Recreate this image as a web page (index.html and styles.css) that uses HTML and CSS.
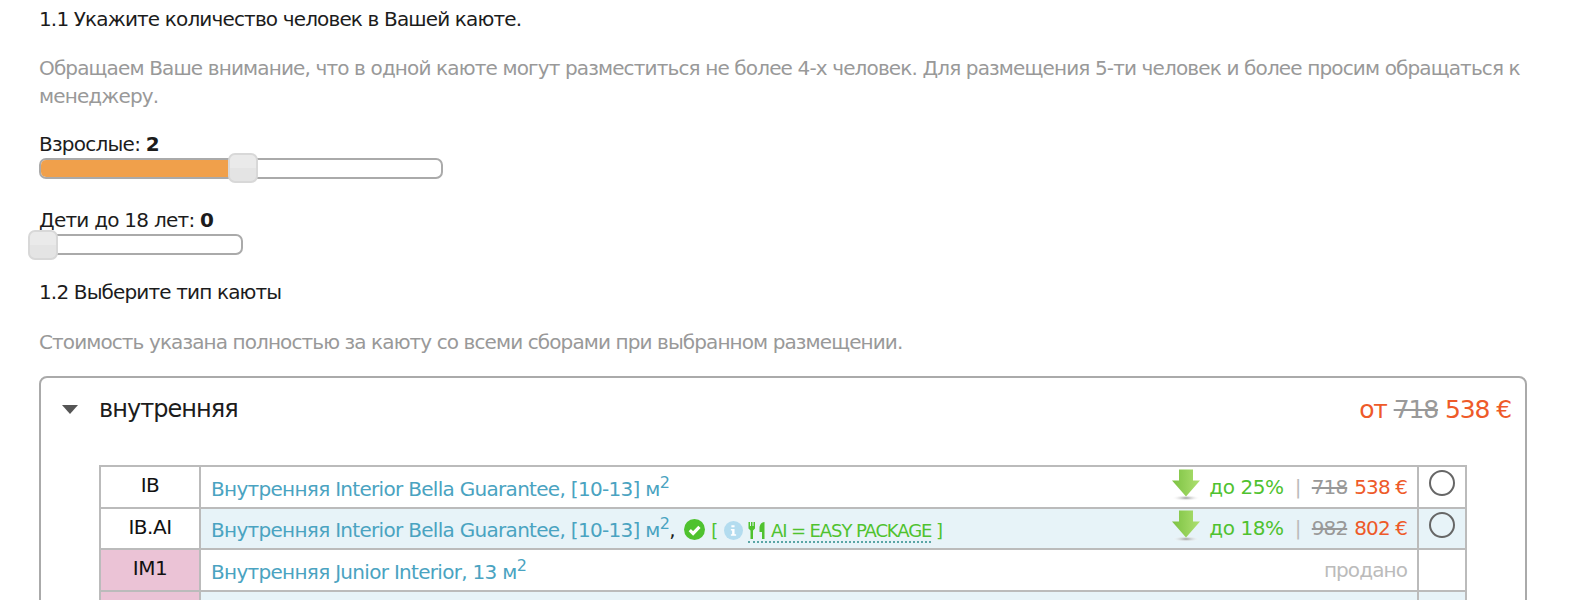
FILE: index.html
```html
<!DOCTYPE html>
<html lang="ru">
<head>
<meta charset="utf-8">
<title>Выбор каюты</title>
<link rel="stylesheet" href="styles.css">
</head>
<body>
<main class="page">
  <h2 class="step">1.1 Укажите количество человек в Вашей каюте.</h2>
  <p class="note">Обращаем Ваше внимание, что в одной каюте могут разместиться не более 4-х человек. Для размещения 5-ти человек и более просим обращаться к менеджеру.</p>
  <div class="field">
    <div class="field-label">Взрослые: <b>2</b></div>
    <div class="slider slider-wide"><div class="fill"></div><div class="handle handle-adults"></div></div>
  </div>
  <div class="field field-kids">
    <div class="field-label">Дети до 18 лет: <b>0</b></div>
    <div class="slider slider-narrow"><div class="handle handle-kids"></div></div>
  </div>
  <h2 class="step step-two">1.2 Выберите тип каюты</h2>
  <p class="note note-two">Стоимость указана полностью за каюту со всеми сборами при выбранном размещении.</p>
  <section class="panel">
    <header class="panel-head">
      <span class="caret"></span>
      <span class="panel-title">внутренняя</span>
      <span class="panel-price">от <s>718</s> 538 €</span>
    </header>
    <table class="cabins">
      <tr>
        <td class="code">IB</td>
        <td class="name">
          <div class="name-row">
            <a class="link">Внутренняя Interior Bella Guarantee, [10-13] м<sup>2</sup></a>
            <span class="offer">
              <svg class="arrow" viewBox="0 0 28 32"><defs><linearGradient id="g1" x1="0" x2="1" y1="0" y2="0"><stop offset="0" stop-color="#7cc242"/><stop offset="1" stop-color="#aee070"/></linearGradient><radialGradient id="s1"><stop offset="0" stop-color="#999"/><stop offset="1" stop-color="#fff" stop-opacity="0"/></radialGradient></defs><ellipse cx="14" cy="28.5" rx="14" ry="3" fill="url(#s1)"/><path d="M7 0H21V11H28L14 27L0 11H7Z" fill="url(#g1)"/></svg>
              <span class="save">до 25%</span><span class="bar">|</span><s class="old">718</s><span class="now">538 €</span>
            </span>
          </div>
        </td>
        <td class="pick"><span class="radio"></span></td>
      </tr>
      <tr>
        <td class="code">IB.AI</td>
        <td class="name alt">
          <div class="name-row">
            <span class="name-main"><a class="link">Внутренняя Interior Bella Guarantee, [10-13] м<sup>2</sup></a>,
            <svg class="check" viewBox="0 0 20 20"><circle cx="10" cy="10" r="10" fill="#4fc22f"/><path d="M5.5 10.5L8.7 13.7L14.7 7.5" fill="none" stroke="#fff" stroke-width="3"/></svg>
            <span class="pack">[ <svg class="info" viewBox="0 0 18 18"><circle cx="9" cy="9" r="9" fill="#b3dcef"/><path d="M7 4h3v2H7zM6.500 7.500h3.500v5h1.500v1.500h-5v-1.500h1.200v-3.500h-1.200z" fill="#fff"/></svg> <span class="pack-name"><svg class="fork" viewBox="0 0 17 17"><path d="M0 0h1.500v4h1v-4h1.500v4h1v-4h1.500v6.500l-2 2v8.500h-2.500v-8.500l-2-2zM11 6c0-3 2-6 5-6v17h-2.500v-7h-2.500z" fill="#4fc22f"/></svg> AI = EASY PACKAGE</span> ]</span></span>
            <span class="offer">
              <svg class="arrow" viewBox="0 0 28 32"><ellipse cx="14" cy="28.500" rx="14" ry="3" fill="url(#s1)"/><path d="M7 0H21V11H28L14 27L0 11H7Z" fill="url(#g1)"/></svg>
              <span class="save">до 18%</span><span class="bar">|</span><s class="old">982</s><span class="now">802 €</span>
            </span>
          </div>
        </td>
        <td class="pick alt"><span class="radio"></span></td>
      </tr>
      <tr>
        <td class="code sold">IM1</td>
        <td class="name">
          <div class="name-row">
            <a class="link">Внутренняя Junior Interior, 13 м<sup>2</sup></a>
            <span class="gone">продано</span>
          </div>
        </td>
        <td class="pick"></td>
      </tr>
      <tr>
        <td class="code sold">&nbsp;</td>
        <td class="name alt"></td>
        <td class="pick alt"></td>
      </tr>
    </table>
  </section>
</main>
</body>
</html>
```

FILE: styles.css
```css
html, body {
  margin: 0;
  padding: 0;
  height: 600px;
  overflow: hidden;
  background: #fff;
}
.page {
  padding: 5px 59px 0 39px;
  font-family: "DejaVu Sans", Verdana, sans-serif;
  font-size: 20px;
  letter-spacing: -0.9px;
  color: #1c1c1c;
}
.step {
  margin: 0;
  font-size: 20px;
  font-weight: 400;
  line-height: 28px;
  letter-spacing: -0.85px;
}
.note {
  margin: 21px 0 0;
  color: #999;
  line-height: 28px;
  letter-spacing: -0.86px;
}
.field { margin-top: 20px; }
.field-kids { margin-top: 28px; }
.field-label { line-height: 28px; letter-spacing: -0.75px; padding-top: 1px; margin-top: -1px; }
.field-kids .field-label { line-height: 27px; }
.slider {
  position: relative;
  height: 21px;
  box-sizing: border-box;
  border: 2px solid #aaa;
  border-radius: 7px;
  background: #fff;
}
.slider-wide { width: 404px; }
.slider-narrow { width: 204px; }
.fill {
  width: 190px;
  height: 100%;
  background: #f0a04b;
  border-radius: 5px 0 0 5px;
}
.handle {
  position: absolute;
  top: -7px;
  width: 30px;
  height: 30px;
  box-sizing: border-box;
  border: 2px solid #d8d8d8;
  border-radius: 7px;
  background: linear-gradient(#eaeaea 50%, #e4e4e4 50%);
}
.handle-adults { left: 187px; }
.handle-kids { left: -13px; top: -6px; }
.step-two { margin-top: 23px; }
.note-two { margin-top: 22px; letter-spacing: -0.9px; }
.panel {
  margin-top: 20px;
  box-sizing: border-box;
  width: 1488px;
  height: 300px;
  border: 2px solid #aaa;
  border-radius: 8px;
}
.panel-head {
  display: flex;
  align-items: center;
  height: 62px;
  padding: 0 14px 0 21px;
}
.caret {
  width: 0;
  height: 0;
  border-left: 8px solid transparent;
  border-right: 8px solid transparent;
  border-top: 9px solid #555;
  margin-right: 21px;
}
.panel-title { font-size: 24px; flex: 1; letter-spacing: -0.95px; }
.panel-price { font-size: 25px; color: #ee5a29; letter-spacing: -1.1px; }
.panel-price s { color: #999; }
.cabins {
  margin: 25px 0 0 58px;
  width: 1368px;
  border-collapse: collapse;
  table-layout: fixed;
}
.cabins td {
  border: 2px solid #bbb;
  height: 41.5px;
  padding: 0;
  box-sizing: border-box;
}
.cabins .code {
  width: 100px;
  text-align: center;
  color: #111;
  letter-spacing: -0.5px;
  padding-bottom: 3px;
}
.sold { background: #ebc3d6; }
.alt { background: #e7f3f8; }
.pick { width: 48px; text-align: center; }
.cabins .pick { vertical-align: top; }
.name-row {
  display: flex;
  justify-content: space-between;
  align-items: center;
  padding: 0 10px;
  white-space: nowrap;
  letter-spacing: -0.7px;
}
.name-row > :first-child { margin-top: 4px; }
.link { color: #4aa3c1; }
.link sup { font-size: 16px; line-height: 0; }
.offer { display: flex; align-items: center; }
.arrow { width: 28px; height: 33px; margin: 0 9px 3px 0; }
.save { color: #4fc22f; letter-spacing: -0.4px; }
.bar { color: #bbb; margin: 0 11px; }
.old { color: #999; margin-right: 7px; letter-spacing: -0.9px; }
.now { color: #ee5a29; letter-spacing: -0.9px; }
.check { width: 21px; height: 21px; vertical-align: -3px; margin-left: 4px; }
.pack { color: #4fc22f; font-size: 18px; letter-spacing: -1.1px; }
.info { width: 19px; height: 19px; vertical-align: -3px; margin: 0 1px 0 2px; }
.pack-name { border-bottom: 2px dotted #5aa6a6; }
.fork { width: 18px; height: 17px; vertical-align: -2px; }
.radio {
  display: block;
  width: 26px;
  height: 26px;
  margin: 3px auto 0;
  box-sizing: border-box;
  border: 2px solid #666;
  border-radius: 50%;
}
.gone { color: #bbb; letter-spacing: -0.9px; }
```
